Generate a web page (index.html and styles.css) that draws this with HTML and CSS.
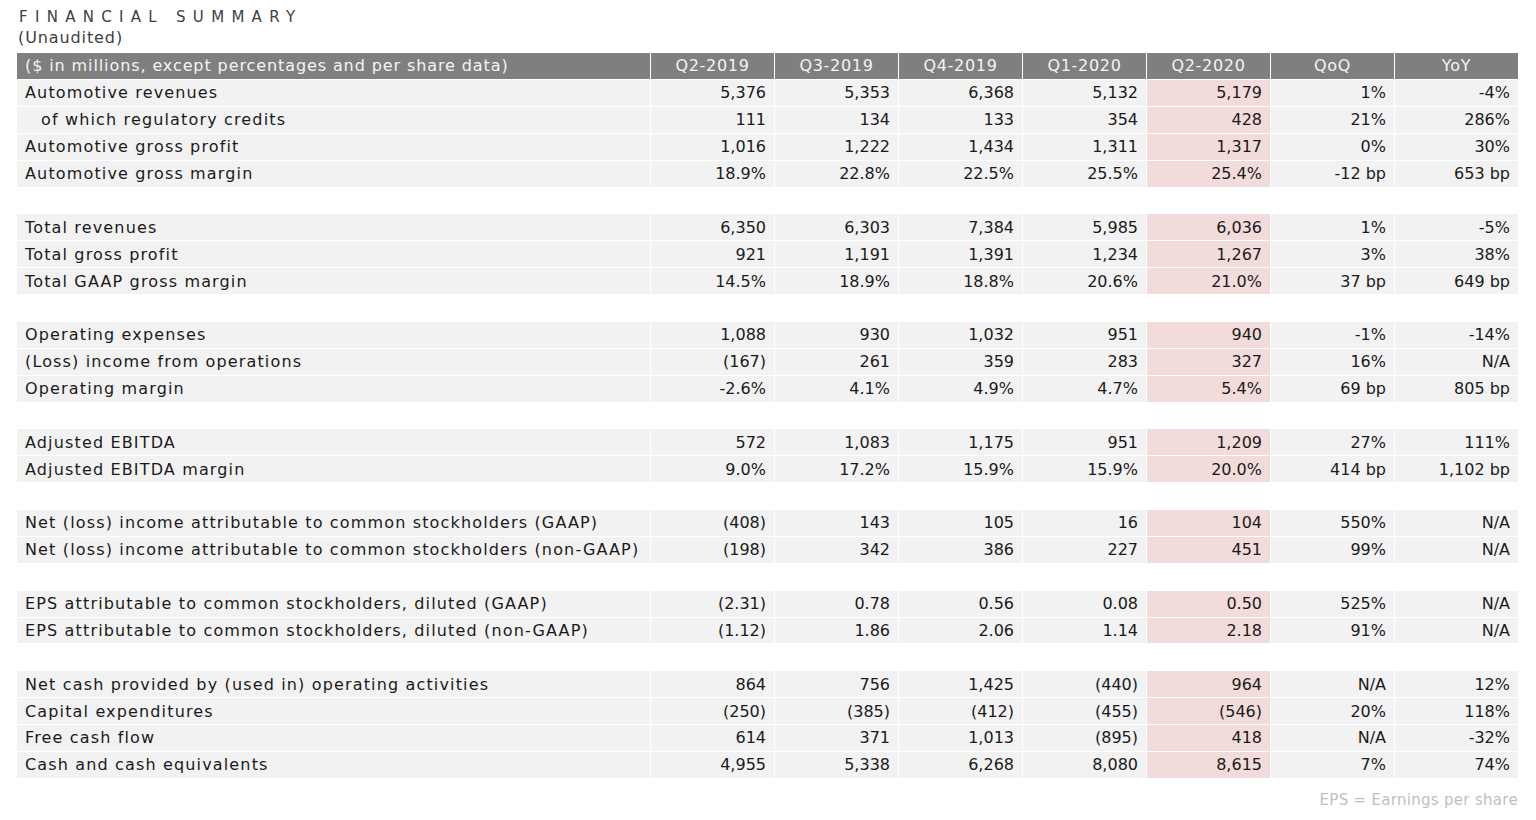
FILE: index.html
```html
<!DOCTYPE html>
<html>
<head>
<meta charset="utf-8">
<link rel="stylesheet" href="styles.css">
</head>
<body>
<div class="page">
  <div class="title">FINANCIAL SUMMARY</div>
  <div class="subtitle">(Unaudited)</div>
  <table class="fin">
    <colgroup>
      <col class="c-label"><col class="c-val"><col class="c-val"><col class="c-val"><col class="c-val"><col class="c-val"><col class="c-val"><col class="c-val">
    </colgroup>
    <thead>
      <tr class="head"><th class="lbl">($ in millions, except percentages and per share data)</th><th>Q2-2019</th><th>Q3-2019</th><th>Q4-2019</th><th>Q1-2020</th><th>Q2-2020</th><th>QoQ</th><th>YoY</th></tr>
    </thead>
    <tbody>
      <tr><td class="lbl">Automotive revenues</td><td>5,376</td><td>5,353</td><td>6,368</td><td>5,132</td><td class="hl">5,179</td><td>1%</td><td>-4%</td></tr>
      <tr><td class="lbl sub">of which regulatory credits</td><td>111</td><td>134</td><td>133</td><td>354</td><td class="hl">428</td><td>21%</td><td>286%</td></tr>
      <tr><td class="lbl">Automotive gross profit</td><td>1,016</td><td>1,222</td><td>1,434</td><td>1,311</td><td class="hl">1,317</td><td>0%</td><td>30%</td></tr>
      <tr><td class="lbl">Automotive gross margin</td><td>18.9%</td><td>22.8%</td><td>22.5%</td><td>25.5%</td><td class="hl">25.4%</td><td>-12 bp</td><td>653 bp</td></tr>
      <tr class="gap"><td colspan="8"></td></tr>
      <tr><td class="lbl">Total revenues</td><td>6,350</td><td>6,303</td><td>7,384</td><td>5,985</td><td class="hl">6,036</td><td>1%</td><td>-5%</td></tr>
      <tr><td class="lbl">Total gross profit</td><td>921</td><td>1,191</td><td>1,391</td><td>1,234</td><td class="hl">1,267</td><td>3%</td><td>38%</td></tr>
      <tr><td class="lbl">Total GAAP gross margin</td><td>14.5%</td><td>18.9%</td><td>18.8%</td><td>20.6%</td><td class="hl">21.0%</td><td>37 bp</td><td>649 bp</td></tr>
      <tr class="gap"><td colspan="8"></td></tr>
      <tr><td class="lbl">Operating expenses</td><td>1,088</td><td>930</td><td>1,032</td><td>951</td><td class="hl">940</td><td>-1%</td><td>-14%</td></tr>
      <tr><td class="lbl">(Loss) income from operations</td><td>(167)</td><td>261</td><td>359</td><td>283</td><td class="hl">327</td><td>16%</td><td>N/A</td></tr>
      <tr><td class="lbl">Operating margin</td><td>-2.6%</td><td>4.1%</td><td>4.9%</td><td>4.7%</td><td class="hl">5.4%</td><td>69 bp</td><td>805 bp</td></tr>
      <tr class="gap"><td colspan="8"></td></tr>
      <tr><td class="lbl">Adjusted EBITDA</td><td>572</td><td>1,083</td><td>1,175</td><td>951</td><td class="hl">1,209</td><td>27%</td><td>111%</td></tr>
      <tr><td class="lbl">Adjusted EBITDA margin</td><td>9.0%</td><td>17.2%</td><td>15.9%</td><td>15.9%</td><td class="hl">20.0%</td><td>414 bp</td><td>1,102 bp</td></tr>
      <tr class="gap"><td colspan="8"></td></tr>
      <tr><td class="lbl">Net (loss) income attributable to common stockholders (GAAP)</td><td>(408)</td><td>143</td><td>105</td><td>16</td><td class="hl">104</td><td>550%</td><td>N/A</td></tr>
      <tr><td class="lbl">Net (loss) income attributable to common stockholders (non-GAAP)</td><td>(198)</td><td>342</td><td>386</td><td>227</td><td class="hl">451</td><td>99%</td><td>N/A</td></tr>
      <tr class="gap"><td colspan="8"></td></tr>
      <tr><td class="lbl">EPS attributable to common stockholders, diluted (GAAP)</td><td>(2.31)</td><td>0.78</td><td>0.56</td><td>0.08</td><td class="hl">0.50</td><td>525%</td><td>N/A</td></tr>
      <tr><td class="lbl">EPS attributable to common stockholders, diluted (non-GAAP)</td><td>(1.12)</td><td>1.86</td><td>2.06</td><td>1.14</td><td class="hl">2.18</td><td>91%</td><td>N/A</td></tr>
      <tr class="gap"><td colspan="8"></td></tr>
      <tr><td class="lbl">Net cash provided by (used in) operating activities</td><td>864</td><td>756</td><td>1,425</td><td>(440)</td><td class="hl">964</td><td>N/A</td><td>12%</td></tr>
      <tr><td class="lbl">Capital expenditures</td><td>(250)</td><td>(385)</td><td>(412)</td><td>(455)</td><td class="hl">(546)</td><td>20%</td><td>118%</td></tr>
      <tr><td class="lbl">Free cash flow</td><td>614</td><td>371</td><td>1,013</td><td>(895)</td><td class="hl">418</td><td>N/A</td><td>-32%</td></tr>
      <tr><td class="lbl">Cash and cash equivalents</td><td>4,955</td><td>5,338</td><td>6,268</td><td>8,080</td><td class="hl">8,615</td><td>7%</td><td>74%</td></tr>
    </tbody>
  </table>
  <div class="note">EPS = Earnings per share</div>
</div>
</body>
</html>
```

FILE: styles.css
```css
html, body {
  margin: 0;
  padding: 0;
  background: #ffffff;
}
body {
  font-family: "DejaVu Sans", "Liberation Sans", sans-serif;
  color: #1a1a1a;
}
.page {
  width: 1503px;
  padding: 8px 0 0 16px;
}
.title {
  font-size: 15px;
  line-height: 18px;
  letter-spacing: 7.3px;
  color: #404040;
  padding-left: 3px;
}
.subtitle {
  font-size: 16px;
  line-height: 24px;
  letter-spacing: 0.9px;
  color: #404040;
  padding-left: 2px;
}
.fin {
  border-collapse: separate;
  border-spacing: 1px;
  table-layout: fixed;
  width: 1503px;
  margin-top: 2px;
  font-size: 16px;
}
.c-label { width: 633px; }
.c-val { width: 123px; }
.fin th, .fin td {
  padding: 0 8px;
  white-space: nowrap;
  overflow: hidden;
}
.fin th {
  background: #7f7f7f;
  color: #f4f4f4;
  font-weight: normal;
  height: 24px;
  padding-bottom: 2px;
  text-align: center;
  letter-spacing: 0.7px;
}
.fin th.lbl {
  text-align: left;
  letter-spacing: 0.9px;
}
.fin td {
  background: #f2f2f2;
  height: 25.88px;
  text-align: right;
}
.fin td.lbl {
  text-align: left;
  letter-spacing: 1.15px;
}
.fin td.sub { padding-left: 24px; }
.fin td.hl { background: #f2dcdb; }
.fin tr.gap td { background: #ffffff; }
.note {
  text-align: right;
  font-size: 15px;
  color: #c0c0c0;
  margin-top: 12px;
  padding-right: 1px;
  letter-spacing: 0.3px;
}
```
